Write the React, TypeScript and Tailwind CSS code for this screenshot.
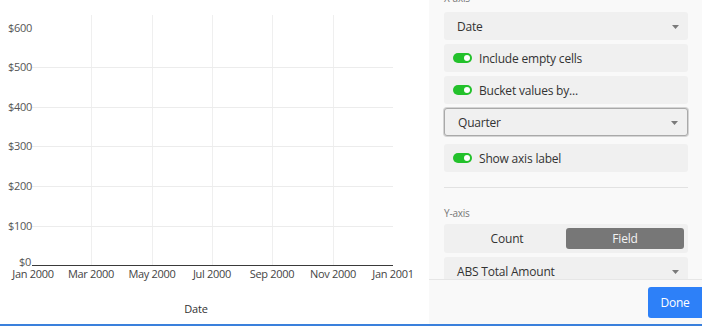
const yTicks = [
  { label: "$600", y: 28, line: false },
  { label: "$500", y: 67, line: true },
  { label: "$400", y: 107, line: true },
  { label: "$300", y: 146, line: true },
  { label: "$200", y: 186, line: true },
  { label: "$100", y: 226, line: true },
];
const xTicks = [
  { label: "Jan 2000", x: 33 },
  { label: "Mar 2000", x: 91 },
  { label: "May 2000", x: 152 },
  { label: "Jul 2000", x: 212 },
  { label: "Sep 2000", x: 272 },
  { label: "Nov 2000", x: 333 },
  { label: "Jan 2001", x: 393 },
];

const Caret = () => (
  <svg width="7" height="4" viewBox="0 0 7 4" className="shrink-0">
    <path d="M0 0 L7 0 L3.5 4 Z" fill="#7a7a7a" />
  </svg>
);

const Toggle = () => (
  <span className="relative inline-block w-[19px] h-[10px] rounded-full bg-[#23c12b] shrink-0">
    <span className="absolute right-[2px] top-[2px] w-[6px] h-[6px] rounded-full bg-white" />
  </span>
);

const Select = ({ value, active }: { value: string; active?: boolean }) => (
  <div
    className={
      "flex items-center justify-between h-[28px] pt-[2px] pl-[13px] pr-[9px] rounded-[3px] bg-[#f0f0f0] text-[12px] text-[#333] " +
      (active ? "border border-[#a9a9a9] shadow-[0_0_0_1px_#d4d4d4] pl-[12px] pr-[8px]" : "")
    }
  >
    <span>{value}</span>
    <Caret />
  </div>
);

const ToggleRow = ({ label }: { label: string }) => (
  <div className="flex items-center gap-[7px] h-[28px] pl-[9px] rounded-[3px] bg-[#f0f0f0] text-[12px] text-[#333]">
    <Toggle />
    <span className="pt-[2px]">{label}</span>
  </div>
);

// 차트 영역
const Chart = () => (
  <svg width="429" height="324" className="block shrink-0">
    {/* 세로 그리드 */}
    {xTicks.slice(1, 6).map((t) => (
      <line key={t.label} x1={t.x + 0.5} x2={t.x + 0.5} y1={15} y2={265} stroke="#efefef" strokeWidth={1} />
    ))}
    {/* 가로 그리드 */}
    {yTicks.filter((t) => t.line).map((t) => (
      <line key={t.label} x1={32} x2={393} y1={t.y + 0.5} y2={t.y + 0.5} stroke="#ececec" strokeWidth={1} />
    ))}
    {yTicks.map((t) => (
      <text key={t.label} x={32} y={t.y + 4} textAnchor="end" fontSize="11" fill="#555" fontFamily="'Open Sans', sans-serif" letterSpacing="-0.3">
        {t.label}
      </text>
    ))}
    <text x={31} y={266} textAnchor="end" fontSize="11" fill="#555" fontFamily="'Open Sans', sans-serif" letterSpacing="-0.3">
      $0
    </text>
    <line x1={32} x2={393} y1={265.5} y2={265.5} stroke="#3a3a3a" strokeWidth={1.2} />
    {xTicks.map((t) => (
      <text key={t.label} x={t.x} y={278} textAnchor="middle" fontSize="11" fill="#444" fontFamily="'Open Sans', sans-serif" letterSpacing="-0.3">
        {t.label}
      </text>
    ))}
    <text x={196} y={313} textAnchor="middle" fontSize="11" fill="#333" fontFamily="'Open Sans', sans-serif">
      Date
    </text>
  </svg>
);

const App = () => {
  return (
    <div className="w-[702px] h-[328px] overflow-hidden bg-white font-['Open_Sans',sans-serif] tracking-[-0.2px]">
      <div className="flex h-[324px]">
        <Chart />

        {/* 설정 패널 */}
        <div className="flex flex-col flex-1 bg-[#f9f9f9] overflow-hidden">
          <div className="h-[279px] overflow-hidden pl-[15px] pr-[14px]">
            <div className="-mt-[9px] flex flex-col">
              <div className="text-[10px] leading-[15px] text-[#777] mb-[6px]">X-axis</div>
              <Select value="Date" />
              <div className="mt-[4px]"><ToggleRow label="Include empty cells" /></div>
              <div className="mt-[4px]"><ToggleRow label="Bucket values by..." /></div>
              <div className="mt-[4px]"><Select value="Quarter" active /></div>
              <div className="mt-[8px]"><ToggleRow label="Show axis label" /></div>
              <div className="mt-[15px] h-px bg-[#e2e2e2]" />
              <div className="mt-[18px] text-[10px] leading-[15px] text-[#777]">Y-axis</div>
              <div className="mt-[3px] flex h-[29px] p-[4px] rounded-[3px] bg-[#f0f0f0] text-[12px]">
                <div className="flex-1 flex items-center justify-center pt-[1px] text-[#333]">Count</div>
                <div className="w-[118px] flex items-center justify-center pt-[1px] rounded-[3px] bg-[#777] text-[#f3f3f3]">Field</div>
              </div>
              <div className="mt-[4px]"><Select value="ABS Total Amount" /></div>
            </div>
          </div>
          <div className="flex-1 flex justify-end items-start pt-[7px] border-t border-[#e6e6e6]">
            <button className="w-[58px] h-[31px] -mr-[4px] rounded-[3px] bg-[#2d80f8] text-white text-[12px] pr-[4px]">
              Done
            </button>
          </div>
        </div>
      </div>
      <div className="h-[2px] bg-[#3a80dc]" />
    </div>
  );
};

export default App;
